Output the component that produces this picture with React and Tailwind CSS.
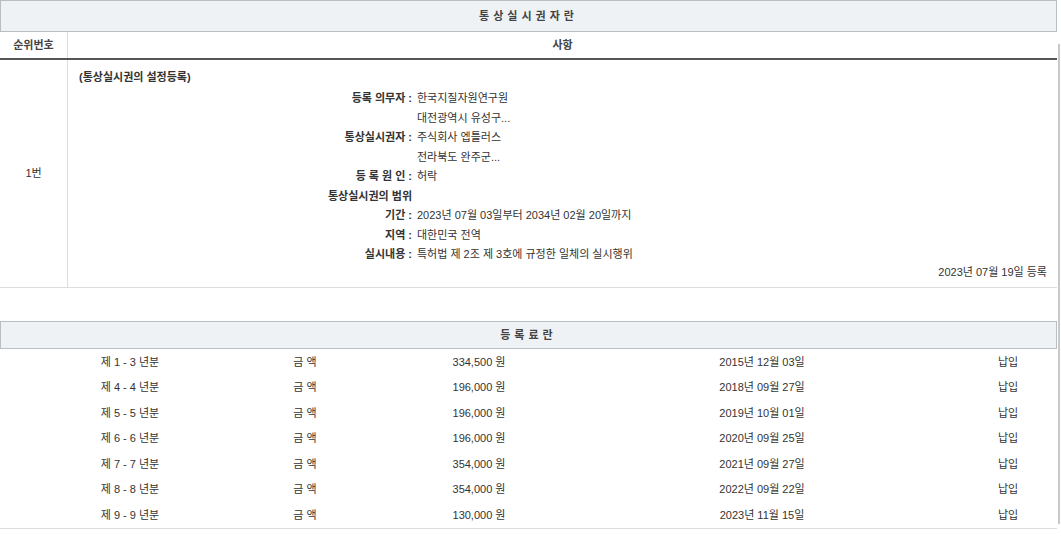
import React from 'react';

const rows = [
  ['등록 의무자 :', '한국지질자원연구원'],
  ['', '대전광역시 유성구...'],
  ['통상실시권자 :', '주식회사 엡틀러스'],
  ['', '전라북도 완주군...'],
  ['등 록 원 인 :', '허락'],
  ['통상실시권의 범위', ''],
  ['기간 :', '2023년 07월 03일부터 2034년 02월 20일까지'],
  ['지역 :', '대한민국 전역'],
  ['실시내용 :', '특허법 제 2조 제 3호에 규정한 일체의 실시행위'],
];

const fees = [
  ['제 1 - 3 년분', '334,500 원', '2015년 12월 03일'],
  ['제 4 - 4 년분', '196,000 원', '2018년 09월 27일'],
  ['제 5 - 5 년분', '196,000 원', '2019년 10월 01일'],
  ['제 6 - 6 년분', '196,000 원', '2020년 09월 25일'],
  ['제 7 - 7 년분', '354,000 원', '2021년 09월 27일'],
  ['제 8 - 8 년분', '354,000 원', '2022년 09월 22일'],
  ['제 9 - 9 년분', '130,000 원', '2023년 11월 15일'],
];

export default function App() {
  return (
    <div className="w-[1061px] h-[543px] bg-white text-[11px] text-[#333] overflow-hidden relative" style={{ fontFamily: '"Liberation Sans", "Noto Sans CJK KR", sans-serif' }}>
      <div className="absolute right-[1px] top-[44px] w-[2px] h-[480px] bg-[#c8c8c8]" />
      <div className="w-[1057px]">
        <div className="h-[32px] bg-[#eef2f5] border border-[#b8bfc4] flex items-center justify-center font-bold tracking-[4px] text-[#444]">통상실시권자란</div>
        <div className="flex h-[28px] border-b-2 border-[#555] font-bold text-[#444]">
          <div className="w-[68px] border-r border-[#ddd] flex items-center justify-center">순위번호</div>
          <div className="flex-1 flex items-center justify-center">사항</div>
        </div>
        <div className="flex h-[228px] border-b border-[#ddd]">
          <div className="w-[68px] border-r border-[#ddd] flex items-center justify-center">1번</div>
          <div className="flex-1 pl-[11px] pt-[9px] pr-[10px]">
            <div className="font-bold h-[19.5px]">(통상실시권의 설정등록)</div>
            {rows.map(([l, v], i) => (
              <div key={i} className="flex h-[19.5px] items-center">
                <div className="w-[333px] text-right font-semibold">{l}</div>
                <div className="pl-[5px]">{v}</div>
              </div>
            ))}
            <div className="text-right">2023년 07월 19일 등록</div>
          </div>
        </div>
        <div className="h-[33px]" />
        <div className="h-[28px] bg-[#eef2f5] border border-[#b8bfc4] flex items-center justify-center font-bold tracking-[4px] text-[#444]">등록료란</div>
        <div className="border-b border-[#ddd]">
          {fees.map((f, i) => (
            <div key={i} className="grid grid-cols-[260px_90px_258px_308px_43px_98px] h-[25.5px] items-center text-center">
              <div>{f[0]}</div>
              <div>금 액</div>
              <div>{f[1]}</div>
              <div>{f[2]}</div>
              <div />
              <div>납입</div>
            </div>
          ))}
        </div>
      </div>
    </div>
  );
}
